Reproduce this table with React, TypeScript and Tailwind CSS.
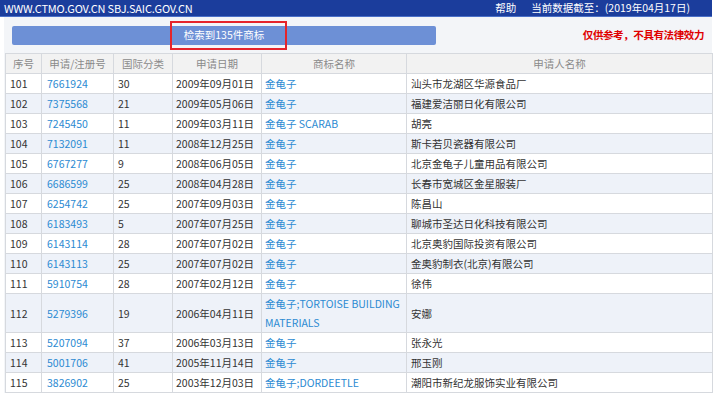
import React from 'react';

type Row = {
  no: number;
  reg: string;
  cls: string;
  date: string;
  name: string;
  applicant: string;
};

const rows: Row[] = [
  { no: 101, reg: '7661924', cls: '30', date: '2009年09月01日', name: '金龟子', applicant: '汕头市龙湖区华源食品厂' },
  { no: 102, reg: '7375568', cls: '21', date: '2009年05月06日', name: '金龟子', applicant: '福建爱洁丽日化有限公司' },
  { no: 103, reg: '7245450', cls: '11', date: '2009年03月11日', name: '金龟子 SCARAB', applicant: '胡亮' },
  { no: 104, reg: '7132091', cls: '11', date: '2008年12月25日', name: '金龟子', applicant: '斯卡若贝瓷器有限公司' },
  { no: 105, reg: '6767277', cls: '9', date: '2008年06月05日', name: '金龟子', applicant: '北京金龟子儿童用品有限公司' },
  { no: 106, reg: '6686599', cls: '25', date: '2008年04月28日', name: '金龟子', applicant: '长春市宽城区金星服装厂' },
  { no: 107, reg: '6254742', cls: '25', date: '2007年09月03日', name: '金龟子', applicant: '陈昌山' },
  { no: 108, reg: '6183493', cls: '5', date: '2007年07月25日', name: '金龟子', applicant: '聊城市圣达日化科技有限公司' },
  { no: 109, reg: '6143114', cls: '28', date: '2007年07月02日', name: '金龟子', applicant: '北京奥豹国际投资有限公司' },
  { no: 110, reg: '6143113', cls: '25', date: '2007年07月02日', name: '金龟子', applicant: '金奥豹制衣(北京)有限公司' },
  { no: 111, reg: '5910754', cls: '28', date: '2007年02月12日', name: '金龟子', applicant: '徐伟' },
  { no: 112, reg: '5279396', cls: '19', date: '2006年04月11日', name: '金龟子;TORTOISE BUILDING MATERIALS', applicant: '安娜' },
  { no: 113, reg: '5207094', cls: '37', date: '2006年03月13日', name: '金龟子', applicant: '张永光' },
  { no: 114, reg: '5001706', cls: '41', date: '2005年11月14日', name: '金龟子', applicant: '邢玉刚' },
  { no: 115, reg: '3826902', cls: '25', date: '2003年12月03日', name: '金龟子;DORDEETLE', applicant: '潮阳市新纪龙服饰实业有限公司' },
];

const App: React.FC = () => {
  return (
    <div className="w-[720px] h-[395px] overflow-hidden bg-white font-['Noto_Sans_CJK_SC',sans-serif] text-[10.5px] text-[#333]">
      {/* top strip */}
      <div className="w-[712px] h-[17px] bg-[#1b3d9c] border-b border-[#4a70c8] flex items-center justify-between pl-[4px] pr-[22px] text-white">
        <span className="text-[11px] tracking-[-0.2px]">WWW.CTMO.GOV.CN SBJ.SAIC.GOV.CN</span>
        <div className="flex gap-[15px]">
          <span>帮助</span>
          <span>当前数据截至：(2019年04月17日)</span>
        </div>
      </div>

      <div className="ml-[4px] w-[708px] bg-[#f3f5f8]">
        {/* result bar */}
        <div className="h-[36px] flex items-center justify-between pl-[8px] pr-[8px]">
          <div className="relative w-[424px] h-[19px] rounded-[2px] bg-[#6d90d6] flex items-center justify-center text-white">
            <span>检索到135件商标</span>
            <div className="absolute left-[158px] top-[-5px] w-[117px] h-[29px] border-2 border-[#e5242b]" />
          </div>
          <span className="font-bold text-[#e00000] tracking-[-0.4px]">仅供参考，不具有法律效力</span>
        </div>

        {/* table */}
        <table className="ml-[1px] w-[707px] table-fixed border-collapse bg-white leading-[19px]">
          <colgroup>
            <col className="w-[36px]" />
            <col className="w-[72px]" />
            <col className="w-[59px]" />
            <col className="w-[89px]" />
            <col className="w-[145px]" />
            <col className="w-[306px]" />
          </colgroup>
          <thead>
            <tr className="bg-[#f2f2f2] text-[#8a8a8a]">
              {['序号', '申请/注册号', '国际分类', '申请日期', '商标名称', '申请人名称'].map((h) => (
                <th key={h} className="border border-[#d6d9de] font-normal text-center">
                  {h}
                </th>
              ))}
            </tr>
          </thead>
          <tbody>
            {rows.map((r, i) => (
              <tr key={r.no} className={i % 2 === 1 ? 'bg-[#eef2f9]' : 'bg-white'}>
                <td className="border border-[#d6d9de] pl-[4px]">{r.no}</td>
                <td className="border border-[#d6d9de] pl-[5px] text-[#2b8ad2]">{r.reg}</td>
                <td className="border border-[#d6d9de] pl-[4px]">{r.cls}</td>
                <td className="border border-[#d6d9de] pl-[3px] whitespace-nowrap">{r.date}</td>
                <td className="border border-[#d6d9de] pl-[3px] pr-[2px] text-[#2b8ad2]">{r.name}</td>
                <td className="border border-[#d6d9de] pl-[4px]">{r.applicant}</td>
              </tr>
            ))}
          </tbody>
        </table>
      </div>
    </div>
  );
};

export default App;
